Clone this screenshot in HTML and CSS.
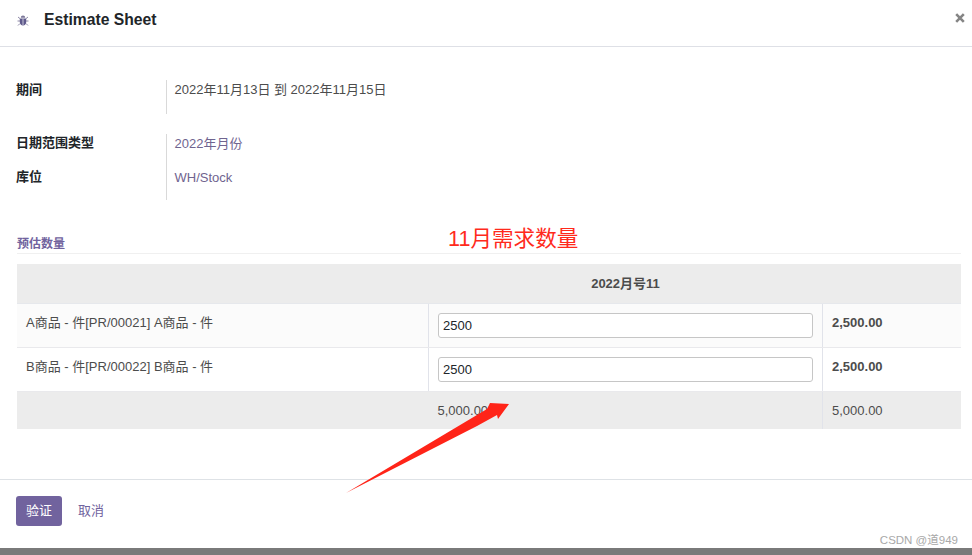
FILE: index.html
```html
<!DOCTYPE html>
<html lang="zh">
<head>
<meta charset="utf-8">
<title>Estimate Sheet</title>
<link rel="stylesheet" href="styles.css">
</head>
<body>
<div class="modal">
  <header class="modal-header">
    <svg class="bug" width="12" height="13" viewBox="0 0 12 12" aria-hidden="true">
      <path class="bug-legs" d="M1 2.500l2 1.600M11 2.500L9 4.100M.5 6.500h2.500M11.500 6.500H9M1 11l2-2M11 11L9 9"/>
      <path class="bug-head" d="M3.800 3.200C3.800 1.800 4.800 1 6 1s2.200.8 2.200 2.200z"/>
      <path class="bug-body" d="M2.800 4h6.400v3.500C9.200 9.700 7.800 11 6 11S2.800 9.700 2.800 7.500z"/>
      <path class="bug-line" d="M6 4v7"/>
    </svg>
    <h1 class="modal-title">Estimate Sheet</h1>
    <svg class="close" width="10" height="10" viewBox="0 0 10 10" aria-hidden="true">
      <path d="M1.200 1.200L8.800 8.800M8.800 1.200L1.200 8.800"/>
    </svg>
  </header>
  <main class="modal-body">
    <div class="info-group group-first">
      <div class="info-label">期间</div>
      <div class="info-value"><div class="info-line">2022年11月13日 到 2022年11月15日</div></div>
    </div>
    <div class="info-group group-second">
      <div class="info-labels">
        <div class="info-label">日期范围类型</div>
        <div class="info-label">库位</div>
      </div>
      <div class="info-value">
        <div class="info-line link">2022年月份</div>
        <div class="info-line link">WH/Stock</div>
      </div>
    </div>
    <h2 class="section-title">预估数量</h2>
    <table class="grid">
      <colgroup><col class="col-name"><col class="col-qty"><col class="col-total"></colgroup>
      <thead>
        <tr><th></th><th>2022月号11</th><th></th></tr>
      </thead>
      <tbody>
        <tr class="odd">
          <td>A商品 - 件[PR/00021] A商品 - 件</td>
          <td class="qty"><input class="qty-input" value="2500"></td>
          <td class="total">2,500.00</td>
        </tr>
        <tr>
          <td>B商品 - 件[PR/00022] B商品 - 件</td>
          <td class="qty"><input class="qty-input" value="2500"></td>
          <td class="total">2,500.00</td>
        </tr>
      </tbody>
      <tfoot>
        <tr><td></td><td>5,000.00</td><td>5,000.00</td></tr>
      </tfoot>
    </table>
  </main>
  <footer class="modal-footer">
    <button class="btn-primary">验证</button>
    <button class="btn-link">取消</button>
  </footer>
  <div class="backdrop-strip"></div>
</div>
<div class="annotation">11月需求数量</div>
<svg class="arrow" width="972" height="555" viewBox="0 0 972 555" aria-hidden="true">
  <path d="M346 493L487 409L490 403L509 404L498 419L497 415L477 426Z"/>
</svg>
<div class="watermark">CSDN @道949</div>
</body>
</html>
```
FILE: styles.css
```css
* { box-sizing: border-box; }
html, body { margin: 0; height: 100%; }
body {
  position: relative;
  width: 972px;
  height: 555px;
  overflow: hidden;
  background: #fff;
  font-family: "Liberation Sans", "Noto Sans CJK SC", sans-serif;
  font-size: 13px;
  line-height: 19px;
  color: #4c4c4c;
}
.modal { display: flex; flex-direction: column; height: 555px; }

.modal-header {
  display: flex;
  align-items: center;
  height: 47px;
  padding: 0 7px 6px 17px;
  border-bottom: 1px solid #dee0e6;
}
.bug { flex: none; margin-right: 15px; }
.bug-legs { fill: none; stroke: #8f8aa8; stroke-width: 1; }
.bug-head { fill: #7c7799; }
.bug-body { fill: #5f5a8c; }
.bug-line { stroke: #c9c6d8; stroke-width: 1; }
.modal-title { margin: 0; flex: 1; font-size: 15.700px; line-height: 20px; font-weight: 700; color: #212529; }
.close { align-self: flex-start; margin-top: 13px; flex: none; }
.close path { fill: none; stroke: #858585; stroke-width: 2.600; }

.modal-body { flex: 1; display: flex; flex-direction: column; padding: 0 11px 0 16px; }
.info-group { display: flex; }
.group-first { margin-top: 33px; height: 34px; }
.group-second { margin-top: 20px; height: 66px; }
.info-labels { display: flex; flex-direction: column; gap: 15px; margin-top: -1px; }
.info-labels, .group-first > .info-label { width: 150px; flex: none; }
.info-label { font-weight: 700; color: #212529; height: 19px; }
.info-value {
  border-left: 1px solid #d9d9d9;
  padding-left: 7.500px;
  display: flex;
  flex-direction: column;
  gap: 14px;
}
.info-line { height: 19px; color: #4c4c4c; }
.group-second .info-line + .info-line { margin-top: 1px; }
.info-line.link { color: #6f648f; }

.section-title {
  margin: 35px 0 10px 1px;
  height: 19px;
  font-size: 12px;
  line-height: 19px;
  font-weight: 700;
  color: #71639e;
  border-bottom: 1px solid #f0f0f0;
}
.grid {
  margin-left: 1px;
  width: 944px;
  border-collapse: collapse;
  table-layout: fixed;
}
.col-name { width: 411.500px; }
.col-qty { width: 394px; }
.grid th {
  height: 39px;
  padding: 0 9px;
  background: #ececec;
  font-weight: 700;
  font-size: 13px;
  color: #4c4c4c;
  text-align: center;
  border-bottom: 1px solid #e6e8ec;
}
.grid tbody td {
  height: 44px;
  padding: 9px;
  vertical-align: top;
  border-bottom: 1px solid #e9e9ec;
}
.grid tbody td + td { border-left: 1px solid #e1e3ea; }
.grid .odd td { background: #fbfbfb; }
.grid .qty { padding: 9px 9px 0; }
.grid .total { font-weight: 700; color: #4c4c4c; padding: 9px; }
.qty-input {
  display: block;
  width: 100%;
  height: 25px;
  padding: 0 4px;
  border: 1px solid #c6c6c6;
  border-radius: 3px;
  font: inherit;
  color: #212529;
  background: #fff;
}
.grid tfoot td {
  height: 38px;
  padding: 0 9px;
  background: #ececec;
}
.grid tfoot td + td + td { border-left: 1px solid #e1e3ea; }

.modal-footer {
  display: flex;
  align-items: center;
  gap: 16px;
  height: 69px;
  padding: 0 16px 6px;
  border-top: 1px solid #dee2e6;
}
.btn-primary, .btn-link {
  font: inherit;
  border: 0;
  padding: 0 0 2px;
  height: 30px;
  border-radius: 3px;
  cursor: pointer;
}
.btn-primary { width: 46px; background: #71639e; color: #fff; }
.btn-link { background: none; color: #71639e; width: 26px; }
.backdrop-strip { height: 7px; flex: none; background: #7a7a7a; }

.annotation {
  position: absolute;
  left: 448px;
  top: 224px;
  font-size: 21.600px;
  line-height: 30px;
  color: #ff2a1c;
  white-space: nowrap;
}
.arrow { position: absolute; left: 0; top: 0; pointer-events: none; }
.arrow path { fill: #ff2418; }
.watermark {
  position: absolute;
  right: 14px;
  top: 532px;
  font-size: 11.500px;
  line-height: 16px;
  color: #a8a8a8;
  white-space: nowrap;
}
```
